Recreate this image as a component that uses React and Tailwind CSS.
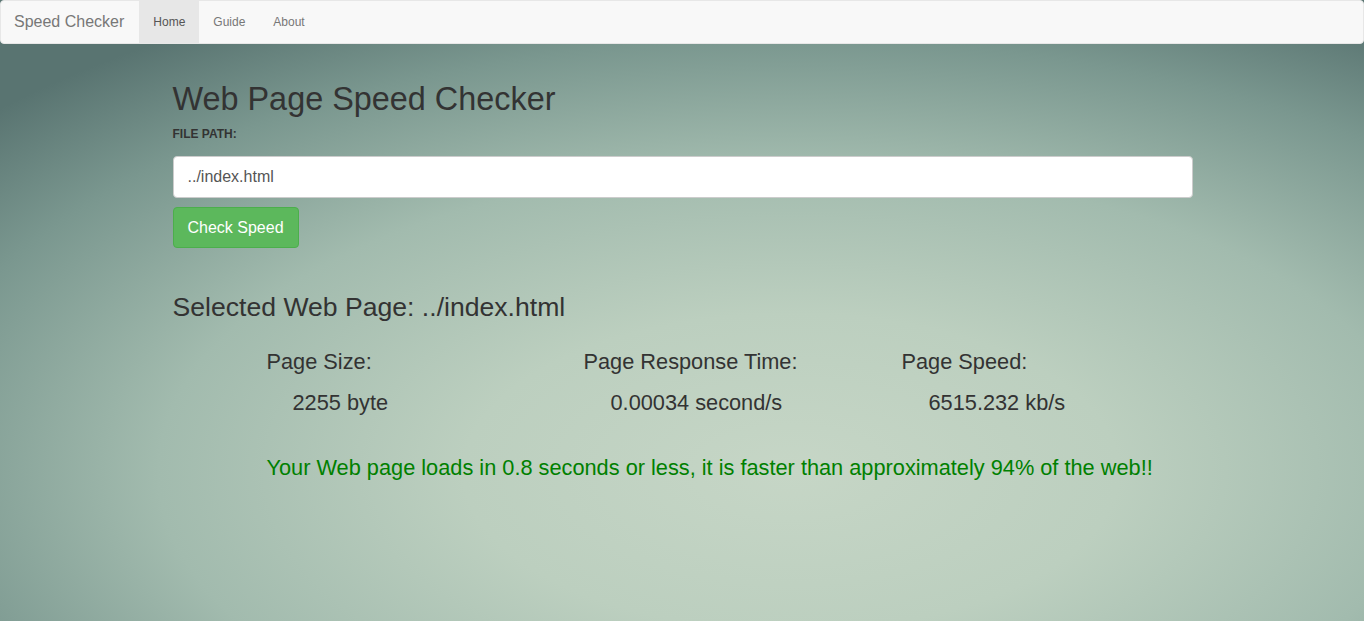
export default function App() {
  return (
    <div className="min-h-screen w-full flex flex-col bg-[radial-gradient(ellipse_80%_85%_at_58%_76%,#c6d6c6_0%,#bccfbf_30%,#a2bbae_58%,#7a978f_82%,#597471_100%)] font-['Liberation_Sans',Arial,sans-serif] text-[#333]">
      <nav className="h-[44px] bg-[#f8f8f8] border border-[#e7e7e7] rounded-[4px] flex items-stretch">
        <a className="pl-[13px] pr-[15px] flex items-center text-[16px] text-[#777]">Speed Checker</a>
        <ul className="flex items-stretch">
          <li className="bg-[#e7e7e7] text-[#555] px-[14px] flex items-center text-[12px]">Home</li>
          <li className="text-[#777] px-[14px] flex items-center text-[12px]">Guide</li>
          <li className="text-[#777] px-[14px] flex items-center text-[12px]">About</li>
        </ul>
      </nav>
      <main className="w-[1021px] mx-auto pl-[1px] pt-[38px]">
        <h1 className="text-[32.4px] leading-[35px]">Web Page Speed Checker</h1>
        <div className="mt-[9px] text-[12px] leading-[17px] font-bold">FILE PATH:</div>
        <input
          className="mt-[13px] w-full h-[42px] bg-white border border-[#ccc] rounded-[4px] px-[14px] text-[16px] text-[#555] outline-none"
          defaultValue="../index.html"
        />
        <button className="mt-[9px] flex items-center justify-center h-[41px] w-[126px] bg-[#5cb85c] border border-[#4cae4c] rounded-[4px] text-white text-[16px]">
          Check Speed
        </button>
        <h3 className="mt-[44px] text-[26.6px] leading-[30px]">Selected Web Page: ../index.html</h3>
        <div className="ml-[94px] mt-[28px] grid grid-cols-[317px_318px_1fr] text-[21.75px] leading-[24px]">
          <div>
            <div>Page Size:</div>
            <div className="mt-[17px] pl-[26px]">2255 byte</div>
          </div>
          <div>
            <div>Page Response Time:</div>
            <div className="mt-[17px] pl-[27px]">0.00034 second/s</div>
          </div>
          <div>
            <div>Page Speed:</div>
            <div className="mt-[17px] pl-[27px]">6515.232 kb/s</div>
          </div>
        </div>
        <p className="ml-[94px] mt-[41px] text-[21.75px] leading-[24px] text-[#008000]">
          Your Web page loads in 0.8 seconds or less, it is faster than approximately 94% of the web!!
        </p>
      </main>
    </div>
  );
}
